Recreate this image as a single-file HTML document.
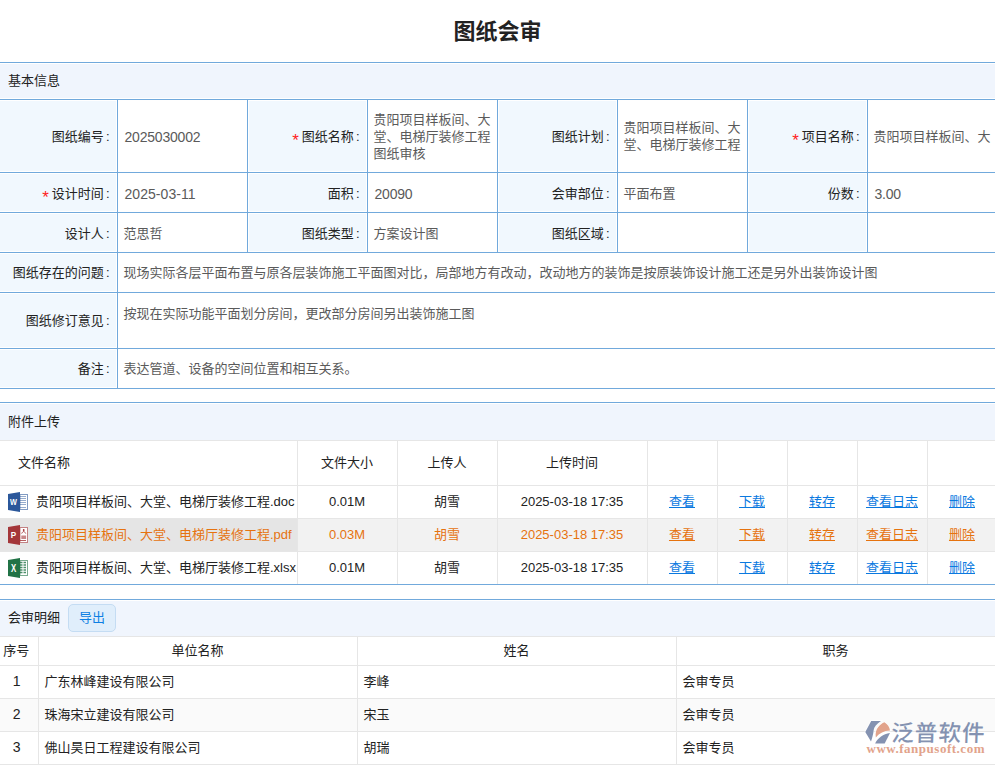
<!DOCTYPE html>
<html lang="zh-CN">
<head>
<meta charset="utf-8">
<title>图纸会审</title>
<style>
*{box-sizing:border-box;margin:0;padding:0}
html,body{width:995px;height:765px;overflow:hidden;background:#fff}
body{font-family:"Liberation Sans","Noto Sans CJK SC",sans-serif;font-size:13px;color:#333;position:relative}
.title{position:absolute;left:0;top:15px;width:995px;height:34px;line-height:34px;text-align:center;font-size:22px;font-weight:bold;color:#222}
.sec{position:absolute;left:0;width:995px;height:37px;background:#f0f5fd;border-top:1px solid #71a9dc;line-height:35px;padding-left:8px;color:#222;box-shadow:inset 0 1px 0 #fff}
.form{position:absolute;left:-1px;top:99px;width:998px;border-collapse:collapse;table-layout:fixed}
.form td{border:1px solid #71a9dc;border-left:none;vertical-align:middle;line-height:17px;padding:0 0 0 6px;color:#5a5a5a;background:#fff}
.form td.l{background:#f1f8fe;color:#222;text-align:right;padding:0 7px 0 0;box-shadow:inset 0 0 0 1px #fff}
.form tr.d1 td{padding-top:2px}
.form td.l i{color:#f22;font-style:normal;margin-right:3px;font-size:17px;line-height:10px;position:relative;top:5px}
.form td.l b{font-weight:normal;margin-left:2px}
.n{font-size:14px;letter-spacing:-0.2px;margin-left:1px;position:relative;top:1px}
.bl{position:absolute;left:0;width:995px;height:1px;background:#71a9dc}
.ft{position:absolute;left:0;top:440px;width:997px;border-collapse:collapse;table-layout:fixed}
.ft td{border-right:1px solid #e6e6e6;border-top:1px solid #e6e6e6;text-align:center;color:#222;white-space:nowrap;padding:0;height:33px;line-height:32px}
.ft tr.h td{height:45px;line-height:44px}
.ft td.f{text-align:left;padding-left:36px;position:relative}
.ft tr.hv td{background:#f2f2f2;color:#e6730f}
.ft tr.hv td.f{background:#e5e5e5}
.ft a{color:#0b79df;text-decoration:underline}
.ft tr.hv a{color:#e6730f}
.ft svg{position:absolute;left:8px;top:6px}
.dt{position:absolute;left:0;top:636px;width:995px;border-collapse:collapse;table-layout:fixed}
.dt td{border-right:1px solid #e6e6e6;border-bottom:1px solid #e6e6e6;border-top:1px solid #e6e6e6;height:33px;line-height:20px;padding:0 0 0 6px;color:#222;white-space:nowrap}
.dt tr.h td{height:29px;line-height:25px;text-align:center;padding:0 0 2px 0}
.dt td.c{text-align:center;padding:0 4px 2px 0;font-size:14px}
.dt tr.alt td{background:#fafafa}
.wm{position:absolute;left:860px;top:715px}
.btn{position:absolute;left:68px;top:604px;width:48px;height:28px;border:1px solid #c4dcf3;border-radius:5px;background:#e0eefb;color:#0d7fe3;text-align:center;line-height:25px}

</style>
</head>
<body>
<div class="title">图纸会审</div>

<div class="sec" style="top:62px;box-shadow:inset 0 1px 0 #fff,inset 0 -1px 0 #fff">基本信息</div>
<table class="form">
<colgroup><col style="width:118px"><col style="width:130px"><col style="width:120px"><col style="width:130px"><col style="width:120px"><col style="width:130px"><col style="width:120px"><col style="width:130px"></colgroup>
<tr style="height:73px">
<td class="l">图纸编号<b>:</b></td><td><span class="n">2025030002</span></td>
<td class="l"><i>*</i>图纸名称<b>:</b></td><td>贵阳项目样板间、大堂、电梯厅装修工程图纸审核</td>
<td class="l">图纸计划<b>:</b></td><td>贵阳项目样板间、大堂、电梯厅装修工程</td>
<td class="l"><i>*</i>项目名称<b>:</b></td><td style="white-space:nowrap;overflow:hidden">贵阳项目样板间、大</td>
</tr>
<tr class="d1" style="height:40px">
<td class="l"><i>*</i>设计时间<b>:</b></td><td><span class="n" style="letter-spacing:0.05px">2025-03-11</span></td>
<td class="l">面积<b>:</b></td><td><span class="n">20090</span></td>
<td class="l">会审部位<b>:</b></td><td>平面布置</td>
<td class="l">份数<b>:</b></td><td><span class="n">3.00</span></td>
</tr>
<tr class="d1" style="height:40px">
<td class="l">设计人<b>:</b></td><td>范思哲</td>
<td class="l">图纸类型<b>:</b></td><td>方案设计图</td>
<td class="l">图纸区域<b>:</b></td><td></td>
<td class="l"></td><td></td>
</tr>
<tr style="height:40px">
<td class="l">图纸存在的问题<b>:</b></td><td colspan="7">现场实际各层平面布置与原各层装饰施工平面图对比，局部地方有改动，改动地方的装饰是按原装饰设计施工还是另外出装饰设计图</td>
</tr>
<tr style="height:56px">
<td class="l">图纸修订意见<b>:</b></td><td colspan="7" style="vertical-align:top;padding-top:12px">按现在实际功能平面划分房间，更改部分房间另出装饰施工图</td>
</tr>
<tr style="height:40px">
<td class="l">备注<b>:</b></td><td colspan="7">表达管道、设备的空间位置和相互关系。</td>
</tr>
</table>

<div class="bl" style="top:388px"></div>
<div class="sec" style="top:402px;height:38px;line-height:37px">附件上传</div>
<table class="ft">
<colgroup><col style="width:297px"><col style="width:100px"><col style="width:100px"><col style="width:150px"><col style="width:70px"><col style="width:70px"><col style="width:70px"><col style="width:70px"><col style="width:70px"></colgroup>
<tr class="h"><td class="f" style="padding-left:18px">文件名称</td><td>文件大小</td><td>上传人</td><td>上传时间</td><td></td><td></td><td></td><td></td><td></td></tr>
<tr><td class="f"><svg width="20" height="20" viewBox="0 0 20 20"><rect x="12" y="2.5" width="7.5" height="15" fill="#fff" stroke="#2b579a" stroke-opacity=".6"/><path d="M12 4.5h6M12 6.5h6M12 8.5h6M12 10.5h6M12 12.5h6M12 15.5h6" stroke="#2b579a" stroke-opacity=".5" fill="none"/><polygon points="0,2 12,0 12,20 0,18" fill="#2b579a"/><text transform="translate(5.5 13.2) scale(0.78 1)" text-anchor="middle" font-family="Liberation Sans,sans-serif" font-weight="bold" font-size="9.4" fill="#fff">W</text></svg>贵阳项目样板间、大堂、电梯厅装修工程.doc</td><td>0.01M</td><td>胡雪</td><td>2025-03-18 17:35</td><td><a>查看</a></td><td><a>下载</a></td><td><a>转存</a></td><td><a>查看日志</a></td><td><a>删除</a></td></tr>
<tr class="hv"><td class="f"><svg width="20" height="20" viewBox="0 0 20 20"><rect x="12" y="2.5" width="7.5" height="15" fill="#fff" stroke="#a4373a" stroke-opacity=".6"/><path d="M13.3 8.3c1.2-.4 2-1.2 2.4-2.6M15.7 5.7c.4 1.4 1.2 2.2 2.4 2.6" stroke="#a4373a" stroke-width=".8" fill="none"/><circle cx="15.7" cy="5" r=".9" fill="#a4373a"/><rect x="13.3" y="10.5" width="4.8" height="3.5" fill="#a4373a" fill-opacity=".6"/><path d="M12 15.5h6" stroke="#a4373a" stroke-opacity=".8"/><polygon points="0,2 12,0 12,20 0,18" fill="#a4373a"/><text transform="translate(5.5 13.3) scale(0.85 1)" text-anchor="middle" font-family="Liberation Sans,sans-serif" font-weight="bold" font-size="9.6" fill="#fff">P</text></svg>贵阳项目样板间、大堂、电梯厅装修工程.pdf</td><td>0.03M</td><td>胡雪</td><td>2025-03-18 17:35</td><td><a>查看</a></td><td><a>下载</a></td><td><a>转存</a></td><td><a>查看日志</a></td><td><a>删除</a></td></tr>
<tr><td class="f"><svg width="20" height="20" viewBox="0 0 20 20"><rect x="12" y="2.5" width="7.5" height="15" fill="#fff" stroke="#217346" stroke-opacity=".6"/><path d="M12 4.5h2.5M15.5 4.5h2.5M12 7h2.5M15.5 7h2.5M12 9.5h2.5M15.5 9.5h2.5M12 12h2.5M15.5 12h2.5M12 14.5h2.5M15.5 14.5h2.5" stroke="#217346" stroke-width="1.5" stroke-opacity=".8" fill="none"/><polygon points="0,2 12,0 12,20 0,18" fill="#217346"/><text transform="translate(5.5 13.5) scale(0.78 1)" text-anchor="middle" font-family="Liberation Sans,sans-serif" font-weight="bold" font-size="10" fill="#fff">X</text></svg>贵阳项目样板间、大堂、电梯厅装修工程.xlsx</td><td>0.01M</td><td>胡雪</td><td>2025-03-18 17:35</td><td><a>查看</a></td><td><a>下载</a></td><td><a>转存</a></td><td><a>查看日志</a></td><td><a>删除</a></td></tr>
</table>
<div class="bl" style="top:584px"></div>

<div class="sec" style="top:599px">会审明细</div>
<div class="btn">导出</div>
<table class="dt">
<colgroup><col style="width:38px"><col style="width:319px"><col style="width:319px"><col style="width:319px"></colgroup>
<tr class="h"><td style="padding:0 5px 2px 0">序号</td><td>单位名称</td><td>姓名</td><td>职务</td></tr>
<tr><td class="c">1</td><td>广东林峰建设有限公司</td><td>李峰</td><td>会审专员</td></tr>
<tr class="alt"><td class="c">2</td><td>珠海宋立建设有限公司</td><td>宋玉</td><td>会审专员</td></tr>
<tr><td class="c">3</td><td>佛山昊日工程建设有限公司</td><td>胡瑞</td><td>会审专员</td></tr>
</table>


<svg class="wm" width="135" height="50" viewBox="0 0 135 50">
<g stroke="#fff" stroke-opacity=".7" stroke-width="1.6" paint-order="stroke">
<path d="M11.2 5.9H21C16.6 8.6 14 12 13.7 15.1C13.3 19 12.3 23 11 26.5L5.3 16.9Z" fill="#8492b1"/>
<path d="M24.5 7.3C27.6 9.4 29.5 12 30 15.4C24 15.6 19.5 18 15.8 22.4C15.2 18 16.2 14.5 18.3 11.9C20 9.8 22 8.3 24.5 7.3Z" fill="#e2a38b"/>
<path d="M30 18.1L24.7 28.4H15.1C18 23 23 19 30 18.1Z" fill="#8492b1"/>
</g>
<text x="31" y="26.2" font-family="Noto Sans CJK SC,sans-serif" font-weight="500" font-size="22.5" letter-spacing="1.1" fill="#8492b1" transform="skewX(-2) translate(0.9 0)">泛普软件</text>
<text x="6.5" y="38.4" font-family="Liberation Serif,serif" font-weight="bold" font-size="13" textLength="118" fill="#e2a38b">www.fanpusoft.com</text>
</svg>
</body>
</html>
